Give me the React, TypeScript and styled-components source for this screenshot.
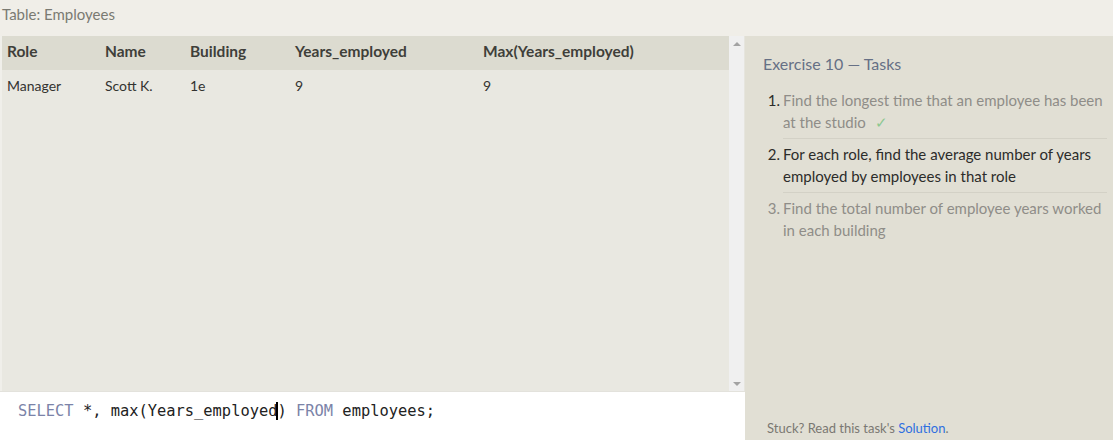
import React from 'react';
import styled, { createGlobalStyle } from 'styled-components';

const GlobalStyle = createGlobalStyle`
  html, body {
    margin: 0;
    padding: 0;
    background: #f0eee8;
    font-family: Lato, 'Open Sans', sans-serif;
  }
`;

const Page = styled.div`
  width: 1113px;
  height: 440px;
  display: flex;
  flex-direction: column;
  overflow: hidden;
  background: #f0eee8;
`;

const TopBar = styled.div`
  height: 36px;
  padding: 5px 0 0 2px;
  box-sizing: border-box;
  font-size: 15px;
  color: #7a7a72;
`;

const Body = styled.div`
  flex: 1;
  display: flex;
  min-height: 0;
`;

const LeftColumn = styled.div`
  width: 745px;
  display: flex;
  flex-direction: column;
`;

const TableArea = styled.div`
  flex: 1;
  display: flex;
  background: #e9e8e1;
  border-left: 2px solid #f0efea;
`;

const TableScroll = styled.div`
  flex: 1;
`;

const Row = styled.div<{ $head?: boolean }>`
  display: grid;
  grid-template-columns: 98px 85px 105px 188px 1fr;
  padding-left: 5px;
  align-items: center;
  box-sizing: border-box;
  height: ${(p) => (p.$head ? '34px' : '30px')};
  padding-bottom: ${(p) => (p.$head ? '4px' : '0')};
  background: ${(p) => (p.$head ? '#dcdbd0' : 'transparent')};
  font-size: ${(p) => (p.$head ? '15.5px' : '14px')};
  font-weight: ${(p) => (p.$head ? 700 : 400)};
  color: ${(p) => (p.$head ? '#3f3f3a' : '#333330')};
`;

const Cell = styled.div`
  white-space: nowrap;
`;

const Scrollbar = styled.div`
  width: 16px;
  background: #f0f0f0;
  border-right: 1px solid #e6e5de;
  display: flex;
  flex-direction: column;
  justify-content: space-between;
  align-items: center;
  padding: 6px 0 5px;
  box-sizing: border-box;
`;

const Arrow = styled.div<{ $down?: boolean }>`
  width: 0;
  height: 0;
  border-left: 4px solid transparent;
  border-right: 4px solid transparent;
  ${(p) =>
    p.$down
      ? 'border-top: 4px solid #a3a3a3;'
      : 'border-bottom: 4px solid #a3a3a3;'}
`;

const Editor = styled.div`
  height: 49px;
  background: #ffffff;
  border-top: 1px solid #e3e2dc;
  box-sizing: border-box;
  padding: 10px 0 0 18px;
  font-family: 'DejaVu Sans Mono', 'Liberation Mono', monospace;
  font-size: 15.4px;
  color: #222;
  white-space: pre;
`;

const Keyword = styled.span`
  color: #7b83a8;
`;

const Caret = styled.span`
  border-left: 2px solid #000;
  margin-left: -1px;
  margin-right: -1px;
`;

const Panel = styled.div`
  flex: 1;
  background: #e1dfd4;
  display: flex;
  flex-direction: column;
  padding: 18px 6px 0 18px;
  box-sizing: border-box;
`;

const PanelTitle = styled.div`
  font-size: 16px;
  color: #667085;
  margin-bottom: 16px;
`;

const TaskList = styled.ol`
  list-style: none;
  margin: 0;
  padding: 0;
`;

const Task = styled.li<{ $active?: boolean; $last?: boolean }>`
  display: flex;
  font-size: 15px;
  line-height: 22px;
  color: ${(p) => (p.$active ? '#2c2c2a' : '#8f8d88')};
  padding: 0 0 ${(p) => (p.$last ? '0' : '6px')};
  margin-bottom: ${(p) => (p.$last ? '0' : '4px')};
  position: relative;
`;

const TaskNum = styled.span<{ $done?: boolean }>`
  width: 17px;
  text-align: right;
  padding-right: 3px;
  flex-shrink: 0;
  color: ${(p) => (p.$done ? '#2c2c2a' : 'inherit')};
`;

const TaskText = styled.span<{ $last?: boolean }>`
  flex: 1;
  ${(p) =>
    p.$last
      ? ''
      : `&:after {
          content: '';
          position: absolute;
          left: 20px;
          right: 0;
          bottom: 0;
          border-bottom: 1px solid #d3d1c6;
        }`}
`;

const Check = styled.span`
  color: #8cc890;
  margin-left: 9px;
`;

const Footer = styled.div`
  margin-top: auto;
  padding: 0 0 4px 4px;
  font-size: 13px;
  color: #7a7872;
`;

const SolutionLink = styled.a`
  color: #2f6fe0;
  text-decoration: none;
`;

const columns = ['Role', 'Name', 'Building', 'Years_employed', 'Max(Years_employed)'];
const rows = [['Manager', 'Scott K.', '1e', '9', '9']];

const App: React.FC = () => {
  return (
    <Page>
      <GlobalStyle />
      <TopBar>Table: Employees</TopBar>
      <Body>
        <LeftColumn>
          <TableArea>
            <TableScroll>
              <Row $head>
                {columns.map((c) => (
                  <Cell key={c}>{c}</Cell>
                ))}
              </Row>
              {rows.map((r, i) => (
                <Row key={i}>
                  {r.map((v, j) => (
                    <Cell key={j}>{v}</Cell>
                  ))}
                </Row>
              ))}
            </TableScroll>
            <Scrollbar>
              <Arrow />
              <Arrow $down />
            </Scrollbar>
          </TableArea>
          <Editor>
            <Keyword>SELECT</Keyword> *, max(Years_employed<Caret />) <Keyword>FROM</Keyword> employees;
          </Editor>
        </LeftColumn>
        <Panel>
          <PanelTitle>Exercise 10 — Tasks</PanelTitle>
          <TaskList>
            <Task>
              <TaskNum $done>1.</TaskNum>
              <TaskText>
                Find the longest time that an employee has been at the studio
                <Check>✓</Check>
              </TaskText>
            </Task>
            <Task $active>
              <TaskNum>2.</TaskNum>
              <TaskText>
                For each role, find the average number of years employed by employees in that role
              </TaskText>
            </Task>
            <Task $last>
              <TaskNum>3.</TaskNum>
              <TaskText $last>Find the total number of employee years worked in each building</TaskText>
            </Task>
          </TaskList>
          <Footer>
            Stuck? Read this task's <SolutionLink href="#">Solution</SolutionLink>.
          </Footer>
        </Panel>
      </Body>
    </Page>
  );
};

export default App;
